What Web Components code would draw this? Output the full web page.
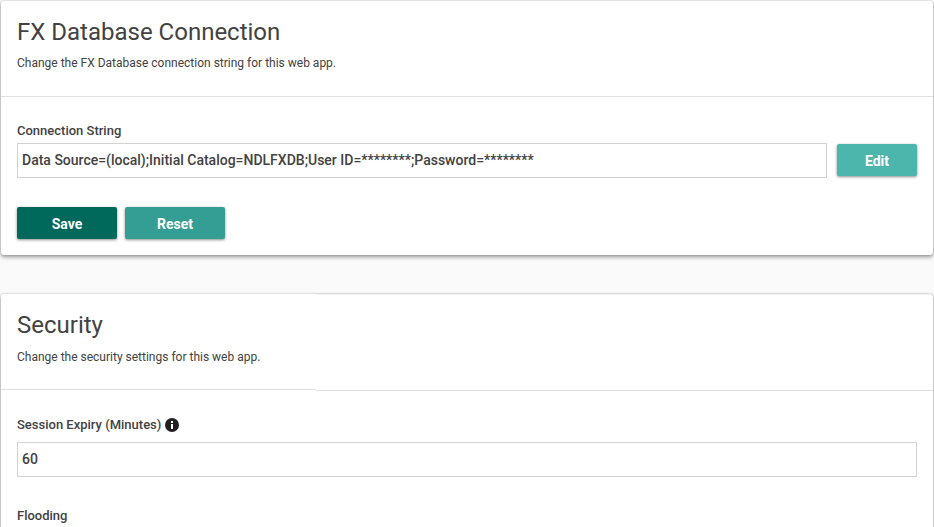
<!DOCTYPE html>
<html>
<head>
<meta charset="utf-8">
<style>
    html, body { margin: 0; height: 527px; overflow: hidden; }
    body {
        background: #fafafa;
        font-family: Roboto, "Liberation Sans", sans-serif;
        color: #3c3c3c;
        padding: 1px 1px 0 1px;
        box-sizing: border-box;
    }
</style>
</head>
<body>
<settings-card heading="FX Database Connection" note="Change the FX Database connection string for this web app.">
    <form-field label="Connection String">
        <text-box value="Data Source=(local);Initial Catalog=NDLFXDB;User ID=********;Password=********"></text-box>
        <app-button slot="side" kind="light" small>Edit</app-button>
    </form-field>
    <button-row>
        <app-button kind="dark">Save</app-button>
        <app-button kind="mid">Reset</app-button>
    </button-row>
</settings-card>
<settings-card seam heading="Security" note="Change the security settings for this web app.">
    <form-field label="Session Expiry (Minutes)" info>
        <text-box value="60"></text-box>
    </form-field>
    <form-field label="Flooding"></form-field>
</settings-card>

<script>
class SettingsCard extends HTMLElement {
    connectedCallback() {
        this.attachShadow({ mode: "open" });
        // the second card has a 1px tear in the reference, right of x=316
        const seam = this.hasAttribute("seam") ? `<div class="tear"></div>` : "";
        this.shadowRoot.innerHTML = `
        <style>
            :host {
                display: block;
                position: relative;
                background: #fff;
                border-radius: 3px;
                box-shadow: 0 2px 4px rgba(0,0,0,.4), 0 0 2px rgba(0,0,0,.2);
                margin-bottom: 39px;
            }
            .head {
                padding: 16px 16px 25px;
                border-bottom: 1px solid #e0e0e0;
            }
            :host([seam]) .head { padding-bottom: 24px; }
            h2 {
                margin: 0;
                font-size: 24px;
                line-height: 30px;
                font-weight: 400;
                color: #424242;
            }
            p {
                margin: 8px 0 0;
                font-size: 12px;
                line-height: 16px;
                color: #424242;
            }
            :host([seam]) p { margin-top: 9px; }
            .body { padding: 26px 16px 16px; }
            :host([seam]) .body { padding-top: 27px; }
            .tear {
                position: absolute;
                left: 315px;
                right: 0;
                top: 1px;
                height: 95px;
                background: #fff;
                border-bottom: 1px solid #e0e0e0;
                border-top-right-radius: 3px;
                box-shadow: 0 0 2px rgba(0,0,0,.2);
                clip-path: inset(-4px 0 0 0);
            }
        </style>
        <div class="head">
            <h2>${this.getAttribute("heading")}</h2>
            <p>${this.getAttribute("note")}</p>
        </div>
        ${seam}
        <div class="body"><slot></slot></div>
        `;
    }
}

class FormField extends HTMLElement {
    connectedCallback() {
        this.attachShadow({ mode: "open" });
        const hasInfo = this.hasAttribute("info");
        const info = hasInfo ? `
            <svg width="14" height="14" viewBox="0 0 14 14">
                <circle cx="7" cy="7" r="7" fill="#212121"/>
                <rect x="6" y="6" width="2" height="5" fill="#fff"/>
                <rect x="6" y="3" width="2" height="2" fill="#fff"/>
            </svg>` : "";
        this.shadowRoot.innerHTML = `
        <style>
            :host { display: block; margin-bottom: 29px; }
            :host([info]) { margin-bottom: 31px; }
            label {
                display: flex;
                align-items: center;
                gap: 4px;
                font-size: 13px;
                line-height: 16px;
                font-weight: 500;
                color: #424242;
                margin-bottom: ${hasInfo ? 9 : 4}px;
            }
            .row { display: flex; gap: 10px; align-items: flex-start; }
            .main { flex: 1; min-width: 0; }
        </style>
        <label>${this.getAttribute("label")}${info}</label>
        <div class="row">
            <div class="main"><slot></slot></div>
            <slot name="side"></slot>
        </div>
        `;
    }
}

class TextBox extends HTMLElement {
    connectedCallback() {
        this.attachShadow({ mode: "open" });
        this.shadowRoot.innerHTML = `
        <style>
            :host {
                display: block;
                height: 35px;
                box-sizing: border-box;
                border: 1px solid #d2d2d2;
                padding: 0 4px;
                font-size: 14px;
                line-height: 33px;
                font-weight: 500;
                color: #424242;
                white-space: nowrap;
            }
        </style>
        ${this.getAttribute("value")}
        `;
    }
}

class AppButton extends HTMLElement {
    connectedCallback() {
        this.attachShadow({ mode: "open" });
        const colours = { dark: "#00695c", mid: "#349e95", light: "#4db6ac" };
        const small = this.hasAttribute("small");
        this.shadowRoot.innerHTML = `
        <style>
            :host {
                display: block;
                flex: none;
                width: ${small ? 80 : 100}px;
                height: 32px;
                margin-top: ${small ? 1 : 0}px;
                border-radius: 2px;
                background: ${colours[this.getAttribute("kind")]};
                box-shadow: 0 1px 3px rgba(0,0,0,.45);
                color: #fff;
                font-size: 14px;
                font-weight: 700;
                line-height: ${small ? 34 : 35}px;
                text-align: center;
            }
        </style>
        <slot></slot>
        `;
    }
}

class ButtonRow extends HTMLElement {
    connectedCallback() {
        this.attachShadow({ mode: "open" });
        this.shadowRoot.innerHTML = `
        <style>
            :host { display: flex; gap: 8px; }
        </style>
        <slot></slot>
        `;
    }
}

customElements.define("settings-card", SettingsCard);
customElements.define("form-field", FormField);
customElements.define("text-box", TextBox);
customElements.define("app-button", AppButton);
customElements.define("button-row", ButtonRow);
</script>
</body>
</html>
